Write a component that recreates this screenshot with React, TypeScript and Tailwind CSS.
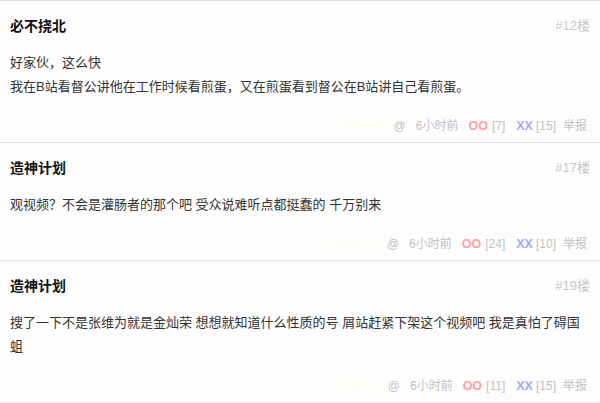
import React from "react";

type Item = {
  name: string;
  floor: string;
  lines: string[];
  id: string;
  oo: number;
  xx: number;
};

const items: Item[] = [
  {
    name: "必不挠北",
    floor: "#12楼",
    lines: ["好家伙，这么快", "我在B站看督公讲他在工作时候看煎蛋，又在煎蛋看到督公在B站讲自己看煎蛋。"],
    id: "#7948546",
    oo: 7,
    xx: 15,
  },
  {
    name: "造神计划",
    floor: "#17楼",
    lines: ["观视频？不会是灌肠者的那个吧 受众说难听点都挺蠢的 千万别来"],
    id: "#7948577",
    oo: 24,
    xx: 10,
  },
  {
    name: "造神计划",
    floor: "#19楼",
    lines: ["搜了一下不是张维为就是金灿荣 想想就知道什么性质的号 屑站赶紧下架这个视频吧 我是真怕了碍国蛆"],
    id: "#7948584",
    oo: 11,
    xx: 15,
  },
];

const font = {
  fontFamily: '"Liberation Sans", "Noto Sans CJK SC", sans-serif',
};

function Comment({ item, last }: { item: Item; last: boolean }) {
  return (
    <div
      className={`border-t border-[#e3e3e3] pt-[15px] pb-[6px] pl-[10px] pr-[10px] ${
        last ? "border-b" : ""
      }`}
    >
      <div className="flex items-center justify-between h-[20px]">
        <span className="text-[14px] font-bold text-[#111] leading-[20px]">{item.name}</span>
        <span className="text-[13px] text-[#c8c8c8] leading-[20px]">{item.floor}</span>
      </div>
      <div className="mt-[15px] text-[13px] leading-[24px] text-[#333]">
        {item.lines.map((l, i) => (
          <div key={i}>{l}</div>
        ))}
      </div>
      <div className="mt-[17px] flex items-center justify-end h-[20px] text-[12px] leading-[20px] text-[#c2c2c2] pr-[3px]">
        <span className="text-[#fffdeb] mr-[6px]">{item.id}</span>
        <span className="mr-[10px]">@</span>
        <span className="mr-[10px]">6小时前</span>
        <span className="font-bold text-[#ffa0a6] text-[12.5px] mr-[4px]">OO</span>
        <span className="mr-[11px]">[{item.oo}]</span>
        <span className="font-bold text-[#a8a8ff] text-[12.5px] mr-[3px]">XX</span>
        <span className="mr-[7px]">[{item.xx}]</span>
        <span>举报</span>
      </div>
    </div>
  );
}

export default function App() {
  return (
    <div className="w-[600px] h-[403px] bg-[#fdfdfd] overflow-hidden" style={font}>
      {items.map((it, i) => (
        <Comment key={i} item={it} last={i === items.length - 1} />
      ))}
    </div>
  );
}
